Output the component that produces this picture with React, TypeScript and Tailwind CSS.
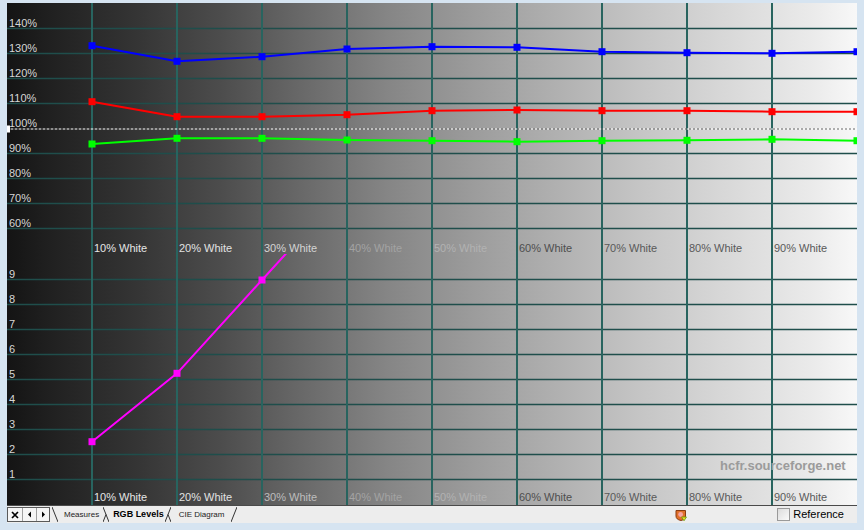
import React from "react";

const FONT = "'Liberation Sans', Arial, sans-serif";
const XS = [92, 177, 262, 347, 432, 517, 602, 687, 772, 857];

const blue = [45.7, 61.3, 56.7, 49, 46.7, 47.3, 51.7, 52.7, 53.3, 51.7];
const red = [101.7, 116.7, 116.7, 114.7, 110.7, 110, 110.7, 110.7, 111.7, 111.7];
const green = [144, 138.3, 138.3, 140, 140.7, 141.7, 140.7, 140.3, 139.3, 140.7];
const magenta = [441.7, 373.3, 280, 186.7];

const topLines = [28.5, 53.5, 78.5, 103.5, 153.5, 178.5, 203.5, 228.5];
const topLabels = ["140%", "130%", "120%", "110%", "100%", "90%", "80%", "70%", "60%"];
const bottomLabels = ["9", "8", "7", "6", "5", "4", "3", "2", "1"];

const xLabels = [
  { t: "10% White", c: "#e6e6e6" },
  { t: "20% White", c: "#e2e2e2" },
  { t: "30% White", c: "#d4d4d4" },
  { t: "40% White", c: "#a3a3a3" },
  { t: "50% White", c: "#b2b2b2" },
  { t: "60% White", c: "#4e4e4e" },
  { t: "70% White", c: "#595959" },
  { t: "80% White", c: "#595959" },
  { t: "90% White", c: "#595959" },
];

const stops: [number, string][] = [
  [0, "#141414"],
  [0.05, "#202020"],
  [0.15, "#343434"],
  [0.25, "#4c4c4c"],
  [0.345, "#686868"],
  [0.45, "#868686"],
  [0.55, "#9c9c9c"],
  [0.65, "#b1b1b1"],
  [0.75, "#c6c6c6"],
  [0.85, "#d9d9d9"],
  [0.95, "#ebebeb"],
  [1, "#f8f8f8"],
];

function pts(ys: number[]) {
  return ys.map((y, i) => `${XS[i]},${y}`).join(" ");
}

function Series({ ys, color }: { ys: number[]; color: string }) {
  return (
    <g>
      <polyline points={pts(ys)} fill="none" stroke={color} strokeWidth={2} strokeLinejoin="round" />
      {ys.map((y, i) => (
        <rect key={i} x={XS[i] - 3.5} y={y - 3.5} width={7} height={7} fill={color} />
      ))}
    </g>
  );
}

function Chart() {
  return (
    <svg width={850} height={502} viewBox="7 3 850 502" className="block">
      <defs>
        <linearGradient id="bg" x1="0" x2="1" y1="0" y2="0">
          {stops.map(([o, c]) => (
            <stop key={o} offset={o} stopColor={c} />
          ))}
        </linearGradient>
        <clipPath id="bottomClip">
          <rect x={7} y={254} width={850} height={251} />
        </clipPath>
      </defs>
      <rect x={7} y={3} width={850} height={502} fill="url(#bg)" />

      {topLines.map((y) => (
        <line key={"t" + y} x1={7} x2={857} y1={y} y2={y} stroke="#1f4e4b" strokeWidth={1.6} />
      ))}
      {bottomLabels.map((_, i) => {
        const y = 279.5 + i * 25;
        return <line key={"b" + y} x1={7} x2={857} y1={y} y2={y} stroke="#1f4e4b" strokeWidth={1.6} />;
      })}
      {XS.slice(0, 9).map((x) => (
        <line key={"v" + x} x1={x} x2={x} y1={3} y2={505} stroke="#28645f" strokeWidth={2} />
      ))}

      <line x1={7} x2={857} y1={129} y2={129} stroke="#6a6a6a" strokeWidth={1} strokeDasharray="2 2" strokeDashoffset={2} />
      <line x1={7} x2={857} y1={129} y2={129} stroke="#ffffff" strokeWidth={1} strokeDasharray="2 2" />
      <rect x={7} y={125.5} width={3} height={7} fill="#ffffff" />

      <Series ys={blue} color="#0000ff" />
      <Series ys={red} color="#ff0000" />
      <Series ys={green} color="#00ff00" />

      <g clipPath="url(#bottomClip)">
        <Series ys={magenta} color="#ff00ff" />
      </g>

      <g fontFamily={FONT} fontSize={11}>
        {topLabels.map((t, i) => (
          <text key={t} x={9} y={26.5 + i * 25} fill="#d6d6d6">
            {t}
          </text>
        ))}
        {bottomLabels.map((t, i) => (
          <text key={"bl" + t} x={9} y={277.5 + i * 25} fill="#d6d6d6">
            {t}
          </text>
        ))}
        {xLabels.map((l, i) => (
          <text key={"xt" + i} x={XS[i] + 2} y={252} fill={l.c}>
            {l.t}
          </text>
        ))}
        {xLabels.map((l, i) => (
          <text key={"xb" + i} x={XS[i] + 2} y={501} fill={i === 2 ? "#bdbdbd" : l.c}>
            {l.t}
          </text>
        ))}
      </g>
      <text x={720} y={470} fontFamily={FONT} fontSize={13} fontWeight="bold" fill="#9b9b9b">
        hcfr.sourceforge.net
      </text>
    </svg>
  );
}

function Slant({ kind, className }: { kind: "back" | "fwd" | "j1" | "j2"; className?: string }) {
  return (
    <svg width={6} height={15} viewBox="0 0 6 15" className={className}>
      {(kind === "back" || kind === "j1") && <line x1={0} y1={0} x2={6} y2={15} stroke="#333" strokeWidth={1} />}
      {(kind === "fwd" || kind === "j2") && <line x1={0} y1={15} x2={6} y2={0} stroke="#333" strokeWidth={1} />}
      {kind === "j1" && <line x1={0} y1={15} x2={3} y2={7.5} stroke="#333" strokeWidth={1} />}
      {kind === "j2" && <line x1={3} y1={7.5} x2={6} y2={15} stroke="#333" strokeWidth={1} />}
    </svg>
  );
}

function TabBar() {
  return (
    <div className="flex h-[18px] w-[850px] items-center border-t border-[#4a4a4a] bg-[#ededed] text-black">
      <div className="flex h-[15px] w-[43px] border border-[#5a5a5a] bg-[#f5f5f5]">
        <div className="flex w-[14px] items-center justify-center">
          <svg width={8} height={8} viewBox="0 0 8 8">
            <path d="M1 1 L7 7 M7 1 L1 7" stroke="#000" strokeWidth={1.7} />
          </svg>
        </div>
        <div className="flex w-[14px] items-center justify-center border-l border-[#a0a0a0]">
          <svg width={5} height={7} viewBox="0 0 5 7">
            <path d="M4 0.5 L1 3.5 L4 6.5 Z" fill="#000" />
          </svg>
        </div>
        <div className="flex w-[13px] items-center justify-center border-l border-[#a0a0a0]">
          <svg width={5} height={7} viewBox="0 0 5 7">
            <path d="M1 0.5 L4 3.5 L1 6.5 Z" fill="#000" />
          </svg>
        </div>
      </div>
      <Slant kind="back" className="ml-[2px]" />
      <span className="ml-[6px] text-[8px] leading-none text-[#222]">Measures</span>
      <Slant kind="j1" className="ml-[4px]" />
      <span className="ml-[4px] text-[9px] font-bold leading-none">RGB Levels</span>
      <Slant kind="j2" className="ml-[1px]" />
      <span className="ml-[8px] text-[8px] leading-none text-[#222]">CIE Diagram</span>
      <Slant kind="fwd" className="ml-[7px]" />
      <div className="flex-1" />
      <svg width={12} height={12} viewBox="0 0 12 12">
        <path d="M1 1.5 H10.5 V7 Q10.5 10.5 6 11.5 Q1 10.5 1 7 Z" fill="#e0702a" stroke="#8a3a10" strokeWidth={1} />
        <circle cx={5.6} cy={5.5} r={2.4} fill="#f6a3a0" />
        <path d="M6.5 8 L11.5 8 L9 11.8 Z" fill="#e8e020" stroke="#6a9a10" strokeWidth={0.8} />
      </svg>
      <div className="ml-[90px] h-[13px] w-[13px] border border-[#9a9a9a] bg-gradient-to-br from-[#dcdcdc] to-[#fafafa]" />
      <span className="ml-[3px] mr-[13px] text-[11px] leading-none">Reference</span>
    </div>
  );
}

export default function App() {
  return (
    <div
      className="flex h-[530px] w-[864px] flex-col bg-[#d6e4f1] px-[7px] pt-[3px]"
      style={{ fontFamily: FONT }}
    >
      <div className="h-[502px] w-[850px]">
        <Chart />
      </div>
      <TabBar />
    </div>
  );
}
